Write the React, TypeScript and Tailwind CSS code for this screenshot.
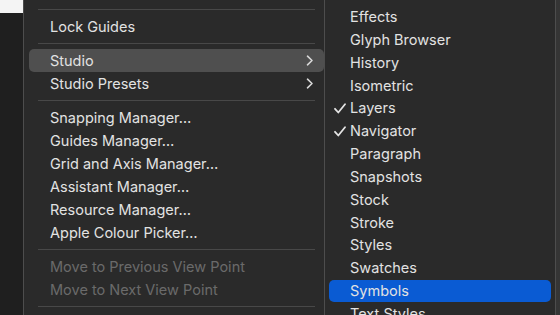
import { ReactNode } from "react";

const MAIN_MENU: (null | { label: string; sub?: boolean; active?: boolean; disabled?: boolean })[] = [
  null,
  { label: "Lock Guides" },
  null,
  { label: "Studio", sub: true, active: true },
  { label: "Studio Presets", sub: true },
  null,
  { label: "Snapping Manager…" },
  { label: "Guides Manager…" },
  { label: "Grid and Axis Manager…" },
  { label: "Assistant Manager…" },
  { label: "Resource Manager…" },
  { label: "Apple Colour Picker…" },
  null,
  { label: "Move to Previous View Point", disabled: true },
  { label: "Move to Next View Point", disabled: true },
  null,
];

const STUDIO_ITEMS = [
  { label: "Effects" },
  { label: "Glyph Browser" },
  { label: "History" },
  { label: "Isometric" },
  { label: "Layers", checked: true },
  { label: "Navigator", checked: true },
  { label: "Paragraph" },
  { label: "Snapshots" },
  { label: "Stock" },
  { label: "Stroke" },
  { label: "Styles" },
  { label: "Swatches" },
  { label: "Symbols", active: true },
  { label: "Text Styles" },
];

function Chevron() {
  return (
    <svg width="8" height="11" viewBox="0 0 8 11" className="text-[#d8d8d8]">
      <path d="M1.5 1.2 L6 5.5 L1.5 9.8" fill="none" stroke="currentColor" strokeWidth="1.6" strokeLinecap="round" strokeLinejoin="round" />
    </svg>
  );
}

function Check() {
  return (
    <svg width="12" height="11" viewBox="0 0 12 11" className="text-[#e4e4e4]">
      <path d="M1 5.8 L4.3 9.5 L11 1.2" fill="none" stroke="currentColor" strokeWidth="1.8" strokeLinecap="round" strokeLinejoin="round" />
    </svg>
  );
}

function Separator() {
  return (
    <div className="h-[11px] flex items-center px-[14px]">
      <div className="h-px w-full bg-[#484848]" />
    </div>
  );
}

function Row({ children, active, className }: { children: ReactNode; active?: boolean; className: string }) {
  return <div className={"flex items-center rounded-[5px] " + className + (active ? "" : " bg-transparent")}>{children}</div>;
}

export default function App() {
  return (
    <div
      className="w-[560px] h-[315px] overflow-hidden flex bg-[#1e1e1e] text-[14.5px] text-[#e2e2e2]"
      style={{ fontFamily: "Inter, 'Liberation Sans', sans-serif" }}
    >
      {/* window behind */}
      <div className="w-[23px] shrink-0 flex flex-col">
        <div className="h-[13px] bg-[#f4f4f4]" />
        <div className="flex-1 bg-[#1f1f1f]" />
      </div>

      {/* main menu */}
      <div className="w-[306px] shrink-0 bg-[#2a2a2a] border-l border-[#4d4d4d] pt-[4px]">
        {MAIN_MENU.map((item, i) =>
          item === null ? (
            <Separator key={i} />
          ) : (
            <div key={i} className="px-[5px]">
              <Row active={item.active} className={"h-[23px] " + (item.active ? "bg-[#4f4f4f]" : "")}>
                <span className={"pl-[21px] flex-1 whitespace-nowrap " + (item.disabled ? "text-[#6a6a6a]" : "")}>
                  {item.label}
                </span>
                {item.sub && (
                  <span className="pr-[10px] flex items-center">
                    <Chevron />
                  </span>
                )}
              </Row>
            </div>
          )
        )}
      </div>

      {/* studio submenu */}
      <div className="relative z-10 -ml-[5px] w-[232px] shrink-0 bg-[#2a2a2a] border-l border-r border-[#4d4d4d] pt-[5.5px] px-[4px]">
        {STUDIO_ITEMS.map((item) => (
          <Row key={item.label} active={item.active} className={"h-[22.85px] " + (item.active ? "bg-[#0a5bd3]" : "")}>
            <span className="w-[21px] pl-[5px] flex items-center">{item.checked && <Check />}</span>
            <span className="whitespace-nowrap">{item.label}</span>
          </Row>
        ))}
      </div>

      <div className="flex-1 bg-[#353535]" />
    </div>
  );
}
